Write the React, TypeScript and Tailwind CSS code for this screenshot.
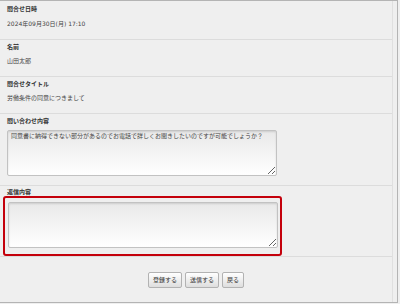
import React from "react";

const font = { fontFamily: '"DejaVu Sans", "Noto Sans CJK JP", sans-serif' };

function Label({ children }: { children: React.ReactNode }) {
  return <div className="text-[6px] leading-[8px] font-bold text-[#333]">{children}</div>;
}

function Value({ children }: { children: React.ReactNode }) {
  return <div className="text-[6px] leading-[8px] text-[#444]">{children}</div>;
}

const areaClass =
  "block h-[46px] w-[270px] rounded-[2px] border border-[#c2c2c2] bg-gradient-to-b from-[#e9e9e9] to-white px-[3px] pt-[1px] text-[6px] leading-[8px] text-[#444] shadow-[inset_0_1px_2px_rgba(0,0,0,0.12)] outline-none";

export default function App() {
  return (
    <div className="h-[304px] w-[400px] bg-[#efefef]" style={font}>
      <div className="w-[398px] h-[303px] border-y border-r border-[#b4b4b4]">
        <div className="w-[393px] h-full border-r border-[#e0e0e0]">
          {/* 問合せ日時 */}
          <div className="border-b border-[#dcdcdc] pl-[7px] pt-[4px] pb-[11px]">
            <Label>問合せ日時</Label>
            <div className="mt-[7px]">
              <Value>2024年09月30日(月) 17:10</Value>
            </div>
          </div>

          <div className="border-b border-[#dcdcdc] pl-[7px] pt-[3px] pb-[11px]">
            <Label>名前</Label>
            <div className="mt-[6px]">
              <Value>山田太郎</Value>
            </div>
          </div>

          <div className="border-b border-[#dcdcdc] pl-[7px] pt-[3px] pb-[11px]">
            <Label>問合せタイトル</Label>
            <div className="mt-[6px]">
              <Value>労働条件の同意につきまして</Value>
            </div>
          </div>

          <div className="border-b border-[#dcdcdc] pl-[7px] pt-[3px] pb-[9px]">
            <Label>問い合わせ内容</Label>
            <textarea
              readOnly
              className={`mt-[5px] ${areaClass}`}
              defaultValue="同意書に納得できない部分があるのでお電話で詳しくお聞きしたいのですが可能でしょうか？"
            />
          </div>

          {/* 返信内容 */}
          <div className="border-b border-[#dcdcdc] pl-[7px] pt-[2px]">
            <Label>返信内容</Label>
            <div className="-ml-[4px] w-[279px] h-[60px] rounded-[3px] border-2 border-[#c4000b] pl-[3px] pt-[4px]">
              <textarea className={areaClass} />
            </div>
          </div>

          <div className="flex justify-center gap-[3px] pt-[15px]">
            {["登録する", "送信する", "戻る"].map((t) => (
              <button
                key={t}
                className="h-[16px] rounded-[2px] border border-[#b2b2b2] bg-gradient-to-b from-white to-[#dedede] px-[4px] text-[6px] leading-[8px] text-[#333]"
              >
                {t}
              </button>
            ))}
          </div>
        </div>
      </div>
    </div>
  );
}
